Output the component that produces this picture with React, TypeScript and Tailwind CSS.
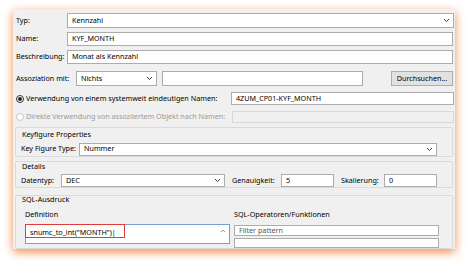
import React from "react";

const Chevron = () => (
  <svg width="7" height="5" viewBox="0 0 7 5" className="shrink-0">
    <polyline points="1,1 3.5,3.5 6,1" fill="none" stroke="#404040" strokeWidth="1" />
  </svg>
);

const Box = ({ className = "", children }: { className?: string; children?: React.ReactNode }) => (
  <div className={`border border-[#acacac] bg-white flex items-center pl-[4px] ${className}`}>{children}</div>
);

const Select = ({ className = "", children }: { className?: string; children?: React.ReactNode }) => (
  <div className={`border border-[#acacac] bg-white flex items-center justify-between pl-[4px] pr-[3px] ${className}`}>
    <span>{children}</span>
    <Chevron />
  </div>
);

const Radio = ({ checked, disabled }: { checked?: boolean; disabled?: boolean }) => (
  <span
    className={`w-[8px] h-[8px] rounded-full border flex items-center justify-center bg-white shrink-0 ${
      disabled ? "border-[#c8c8c8]" : "border-[#333333]"
    }`}
  >
    {checked && <span className="w-[4px] h-[4px] rounded-full bg-[#222222]" />}
  </span>
);

export default function App() {
  return (
    <div className="w-[469px] h-[269px] bg-white overflow-hidden pt-[9px] pl-[13px]">
      <div
        className="w-[442px] h-[240px] bg-[#f0f0f0] overflow-hidden text-[7.2px] leading-none text-black whitespace-nowrap flex flex-col shadow-[0_3px_9px_rgba(240,110,30,0.8)]"
        style={{ fontFamily: "'Noto Sans', 'DejaVu Sans', sans-serif" }}
      >
        {/* Typ */}
        <div className="flex items-center mt-[4px] h-[15px]">
          <span className="w-[54px] pl-[3px]">Typ:</span>
          <Select className="flex-1 h-[15px] mr-[1px]">Kennzahl</Select>
        </div>
        <div className="flex items-center mt-[4px] h-[14px]">
          <span className="w-[54px] pl-[3px]">Name:</span>
          <Box className="flex-1 h-[14px] mr-[2px]">KYF_MONTH</Box>
        </div>
        <div className="flex items-center mt-[4px] h-[14px]">
          <span className="w-[54px] pl-[3px]">Beschreibung:</span>
          <Box className="flex-1 h-[14px] mr-[2px]">Monat als Kennzahl</Box>
        </div>
        {/* Assoziation */}
        <div className="flex items-center mt-[7px] h-[15px]">
          <span className="w-[63px] pl-[3px]">Assoziation mit:</span>
          <Select className="w-[81px] h-[15px]">Nichts</Select>
          <Box className="w-[201px] h-[15px] ml-[5px]" />
          <div className="ml-[28px] w-[62px] h-[15px] border border-[#adadad] bg-[#e1e1e1] flex items-center justify-center">
            Durchsuchen...
          </div>
        </div>
        {/* Radios */}
        <div className="flex items-center mt-[6px] h-[13px]">
          <span className="pl-[3px] flex items-center gap-[2px] w-[218px]">
            <Radio checked />
            <span>Verwendung von einem systemweit eindeutigen Namen:</span>
          </span>
          <Box className="flex-1 h-[13px] mr-[1px]">4ZUM_CP01-KYF_MONTH</Box>
        </div>
        <div className="flex items-center mt-[6px] h-[12px] text-[#9a9a9a]">
          <span className="pl-[3px] flex items-center gap-[2px] w-[219px]">
            <Radio disabled />
            <span>Direkte Verwendung von assoziiertem Objekt nach Namen:</span>
          </span>
          <div className="flex-1 h-[12px] mr-[1px] border border-[#d9d9d9] bg-[#f0f0f0]" />
        </div>

        {/* Keyfigure Properties */}
        <div className="mt-[4px] mx-[2px] h-[34px] border border-[#dadada] rounded-[2px] flex flex-col">
          <div className="h-[11px] pl-[6px] flex items-center mt-[1px]">Keyfigure Properties</div>
          <div className="flex items-center mt-[3px] h-[12px]">
            <span className="w-[63px] pl-[5px]">Key Figure Type:</span>
            <Select className="w-[358px] h-[13px]">Nummer</Select>
          </div>
        </div>

        {/* Details */}
        <div className="mt-[4px] mx-[2px] h-[31px] border border-[#dadada] rounded-[2px] flex flex-col">
          <div className="h-[10px] pl-[6px] flex items-center">Details</div>
          <div className="flex items-center mt-[2px] h-[13px]">
            <span className="w-[45px] pl-[5px]">Datentyp:</span>
            <Select className="w-[164px] h-[13px]">DEC</Select>
            <span className="ml-[7px] w-[49px]">Genauigkeit:</span>
            <Box className="w-[53px] h-[13px]">5</Box>
            <span className="ml-[7px] w-[43px]">Skalierung:</span>
            <Box className="w-[53px] h-[13px]">0</Box>
          </div>
        </div>

        {/* SQL-Ausdruck */}
        <div className="mt-[7px] mx-[2px] flex-1 border border-[#dadada] rounded-[2px] flex flex-col">
          <div className="h-[8px] pl-[6px] flex items-center">SQL-Ausdruck</div>
          <div className="flex mt-[6px]">
            <div className="w-[215px] pl-[9px] flex flex-col">
              <span className="h-[10px] flex items-center">Definition</span>
              <div className="relative mt-[4px] h-[20px] w-[205px] border border-[#7a9cd0] bg-white">
                <span className="absolute left-[4px] top-[4px]">snumc_to_int("MONTH")|</span>
                <svg className="absolute right-[3px] top-[4px]" width="6" height="4" viewBox="0 0 6 4">
                  <polyline points="1,3 3,1 5,3" fill="none" stroke="#9a9a9a" strokeWidth="1" />
                </svg>
                <div className="absolute -left-[1px] -top-[1px] w-[100px] h-[14px] border-[1.5px] border-[#e03c3c]" />
              </div>
            </div>
            <div className="flex-1 flex flex-col pl-[3px]">
              <span className="h-[10px] flex items-center">SQL-Operatoren/Funktionen</span>
              <Box className="mt-[5px] w-[205px] h-[11px] text-[#555555]">Filter pattern</Box>
              <div className="mt-[2px] w-[205px] h-[10px] border border-[#acacac] bg-white" />
            </div>
          </div>
        </div>
      </div>
    </div>
  );
}
